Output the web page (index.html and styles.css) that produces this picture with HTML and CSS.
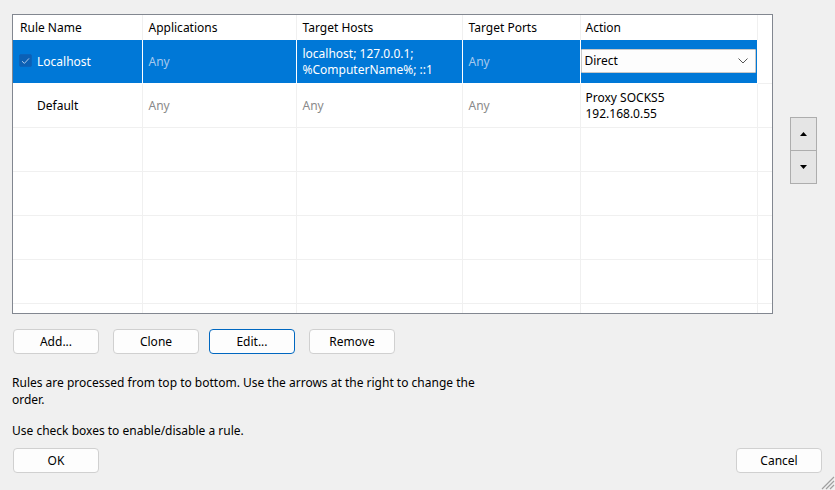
FILE: index.html
```html
<!DOCTYPE html>
<html>
<head>
<meta charset="utf-8">
<link rel="stylesheet" href="styles.css">
</head>
<body>
<div class="dialog">
  <div class="top">
    <div class="grid">
      <table class="rules">
        <colgroup>
          <col class="c1"><col class="c2"><col class="c3"><col class="c4"><col class="c5"><col class="c6">
        </colgroup>
        <thead>
          <tr class="head">
            <th>Rule Name</th><th>Applications</th><th>Target Hosts</th><th>Target Ports</th><th class="act">Action</th><th class="fill"></th>
          </tr>
        </thead>
        <tbody>
          <tr class="row sel">
            <td class="name"><span class="check"><svg width="9" height="8" viewBox="0 0 9 8"><path d="M1 4.2 L3.4 6.4 L8 1.4" fill="none" stroke="#a9c8ea" stroke-width="1"/></svg></span>Localhost</td>
            <td class="any">Any</td>
            <td>localhost; 127.0.0.1;<br>%ComputerName%; ::1</td>
            <td class="any">Any</td>
            <td class="act combo-cell"><div class="combo"><span>Direct</span><svg width="10" height="6" viewBox="0 0 10 6"><path d="M0.5 0.5 L5 5 L9.5 0.5" fill="none" stroke="#555" stroke-width="1"/></svg></div></td>
            <td class="fill"></td>
          </tr>
          <tr class="row">
            <td class="name">Default</td>
            <td class="any">Any</td>
            <td class="any">Any</td>
            <td class="any">Any</td>
            <td class="act">Proxy SOCKS5<br>192.168.0.55</td>
            <td class="fill"></td>
          </tr>
          <tr class="row"><td></td><td></td><td></td><td></td><td></td><td class="fill"></td></tr>
          <tr class="row"><td></td><td></td><td></td><td></td><td></td><td class="fill"></td></tr>
          <tr class="row"><td></td><td></td><td></td><td></td><td></td><td class="fill"></td></tr>
          <tr class="row"><td></td><td></td><td></td><td></td><td></td><td class="fill"></td></tr>
          <tr class="row"><td></td><td></td><td></td><td></td><td></td><td class="fill"></td></tr>
        </tbody>
      </table>
    </div>
    <div class="arrows">
      <button class="arrow"><svg width="7" height="4" viewBox="0 0 7 4"><path d="M0 4 L3.5 0 L7 4 Z" fill="#000"/></svg></button>
      <button class="arrow"><svg width="7" height="4" viewBox="0 0 7 4"><path d="M0 0 L7 0 L3.5 4 Z" fill="#000"/></svg></button>
    </div>
  </div>
  <div class="actions">
    <button class="btn">Add...</button>
    <button class="btn">Clone</button>
    <button class="btn focus">Edit...</button>
    <button class="btn">Remove</button>
  </div>
  <p class="info">Rules are processed from top to bottom. Use the arrows at the right to change the<br>order.</p>
  <p class="info second">Use check boxes to enable/disable a rule.</p>
  <div class="footer">
    <button class="btn">OK</button>
    <button class="btn">Cancel</button>
  </div>
  <svg class="grip" width="14" height="14" viewBox="0 0 14 14"><path d="M13 5 L5 13 M13 9 L9 13 M13 1 L1 13" stroke="#a0a0a0" stroke-width="1.2"/></svg>
</div>
</body>
</html>
```
FILE: styles.css
```css
html, body {
  margin: 0;
  padding: 0;
  background: #f0f0f0;
}
body {
  font-family: "Segoe UI", "Noto Sans", "Liberation Sans", sans-serif;
  font-size: 12px;
  color: #000;
}
.dialog {
  position: relative;
  width: 835px;
  height: 490px;
  box-sizing: border-box;
  padding: 14px 0 0 12px;
  display: flex;
  flex-direction: column;
}
.top {
  display: flex;
  align-items: flex-start;
}
.grid {
  width: 759px;
  height: 298px;
  border: 1px solid #828790;
  background: #fff;
  overflow: hidden;
}
.rules {
  border-collapse: collapse;
  table-layout: fixed;
  width: 759px;
}
.c1 { width: 129px; }
.c2 { width: 154px; }
.c3 { width: 166px; }
.c4 { width: 118px; }
.c5 { width: 177px; }
.c6 { width: 15px; }
.rules th, .rules td {
  padding: 0 0 0 6px;
  border-right: 1px solid #f0f0f0;
  text-align: left;
  font-weight: normal;
  white-space: nowrap;
  overflow: hidden;
  line-height: 16px;
}
.rules th.act, .rules td.act { padding-left: 5px; }
.rules th.fill, .rules td.fill { border-right: none; }
.head th {
  height: 24px;
  padding-top: 1px;
  vertical-align: middle;
}
.head th:first-child { padding-left: 7px; }
.row td {
  height: 43px;
  border-bottom: 1px solid #f0f0f0;
  vertical-align: middle;
}
.row td.name { padding-left: 24px; }
.row.sel td {
  background: #0078d7;
  color: #fff;
  border-right-color: #fff;
  border-bottom-color: #fff;
}
.row.sel td.fill { background: #fff; border-bottom-color: #f0f0f0; }
.row.sel td.name { padding-left: 6px; }
.any { color: #8a8a8a; }
.row.sel .any { color: #a6c9ee; }
.check {
  display: inline-flex;
  align-items: center;
  justify-content: center;
  width: 11px;
  height: 11px;
  border: 1px solid #0a64bc;
  background: #0b60b5;
  border-radius: 2px;
  margin-right: 5px;
  vertical-align: 1px;
}
.row.sel td.combo-cell { padding: 0 1px 0 0; }
.combo {
  height: 22px;
  margin-top: -2px;
  border: 1px solid #c8c8c8;
  background: #fdfdfd;
  color: #000;
  display: flex;
  align-items: center;
  justify-content: space-between;
  padding: 0 7px 0 3px;
  border-radius: 1px;
}
.arrows {
  display: flex;
  flex-direction: column;
  margin: 103px 0 0 17px;
}
.arrow {
  width: 27px;
  height: 34px;
  margin: 0 0 -1px 0;
  padding: 0;
  border: 1px solid #adadad;
  background: #e5e5e5;
  display: flex;
  align-items: center;
  justify-content: center;
}
.actions {
  display: flex;
  gap: 14px;
  margin: 15px 0 0 1px;
}
.btn {
  width: 86px;
  height: 25px;
  padding: 0;
  border: 1px solid #d0d0d0;
  border-radius: 4px;
  background: #fdfdfd;
  font: inherit;
  color: #000;
}
.actions .btn:nth-child(3) { margin-left: -4px; }
.btn.focus { border-color: #0067c0; }
.info {
  margin: 20px 0 0 0;
  line-height: 17px;
}
.info.second { margin-top: 14px; }
.footer {
  display: flex;
  justify-content: space-between;
  margin: 9px 13px 0 1px;
}
.grip {
  position: absolute;
  right: 0;
  bottom: 0;
}
```
